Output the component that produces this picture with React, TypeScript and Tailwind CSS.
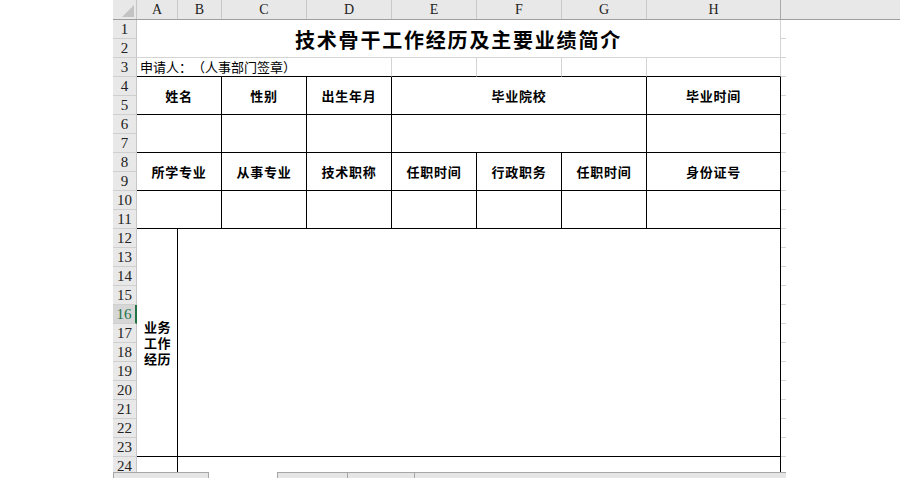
import React from "react";

const cols = [
  { l: "A", w: "w-[41px]" },
  { l: "B", w: "w-[44px]" },
  { l: "C", w: "w-[85px]" },
  { l: "D", w: "w-[85px]" },
  { l: "E", w: "w-[85px]" },
  { l: "F", w: "w-[85px]" },
  { l: "G", w: "w-[85px]" },
  { l: "H", w: "w-[134px]" },
  { l: "", w: "w-[5px]" },
];

const iRows = [
  "row-start-1", "row-start-2", "row-start-3", "row-start-4", "row-start-5", "row-start-6",
  "row-start-7", "row-start-8", "row-start-9", "row-start-10", "row-start-11", "row-start-12",
  "row-start-13", "row-start-14", "row-start-15", "row-start-16", "row-start-17", "row-start-18",
  "row-start-19", "row-start-20", "row-start-21", "row-start-22", "row-start-23", "row-start-24",
];

const B = "border-r border-b border-r-black border-b-black";
const H = "flex items-center justify-center font-bold text-[13px] tracking-[0.8px] text-black";

function Cell({ c, children }: { c: string; children?: React.ReactNode }) {
  return <div className={c}>{children}</div>;
}

export default function App() {
  const rowNums = Array.from({ length: 24 }, (_, i) => i + 1);
  return (
    <div className="w-[900px] h-[478px] overflow-hidden bg-white pl-[113px] font-['Noto_Sans_CJK_SC',sans-serif] [text-spacing-trim:space-all]">
      {/* column header */}
      <div className="flex h-[20px] border-b border-[#9e9e9e] bg-[#e8e8e8] font-['Liberation_Serif',serif] text-[14px] text-[#222]">
        <div className="w-[24px] border-r border-[#c6c6c6] relative">
          <svg className="absolute right-[2px] bottom-[2px]" width="12" height="12" viewBox="0 0 12 12">
            <polygon points="12,0 12,12 0,12" fill="#c3c3c3" />
          </svg>
        </div>
        {cols.map((c, i) => (
          <div
            key={i}
            className={`${c.w} flex items-center justify-center border-r ${i === 7 ? "border-[#a8a8a8]" : "border-[#c9c9c9]"} ${i === 8 ? "border-r-0" : ""}`}
          >
            {c.l}
          </div>
        ))}
      </div>

      {/* body */}
      <div className="flex h-[452px] overflow-hidden">
        <div className="w-[24px] flex flex-col font-['Liberation_Serif',serif] text-[15px]">
          {rowNums.map((n) => (
            <div
              key={n}
              className={`h-[19px] shrink-0 flex items-center justify-center border-b border-b-[#cfcfcf] ${
                n === 16
                  ? "bg-[#d6d6d6] text-[#217346] border-r-2 border-r-[#217346]"
                  : "bg-[#e8e8e8] text-[#222] border-r border-r-[#c6c6c6]"
              }`}
            >
              {n}
            </div>
          ))}
        </div>

        <div className="grid grid-cols-[41px_44px_85px_85px_85px_85px_85px_134px_5px] grid-rows-[repeat(24,19px)] text-black">
          {/* title */}
          <Cell c="col-start-1 col-end-9 row-start-1 row-end-3 border-r border-b border-[#d4d4d4] flex items-center justify-center pt-[2px] text-[20px] font-bold tracking-[1.8px] text-black">
            技术骨干工作经历及主要业绩简介
          </Cell>
          {/* row 3 */}
          <Cell c="col-start-1 col-end-5 row-start-3 border-r border-b border-r-[#d4d4d4] border-b-black flex items-center pl-[3px] text-[13px] whitespace-nowrap">
            申请人：（人事部门签章）
          </Cell>
          <Cell c="col-start-5 row-start-3 border-r border-b border-r-[#d4d4d4] border-b-black" />
          <Cell c="col-start-6 row-start-3 border-r border-b border-r-[#d4d4d4] border-b-black" />
          <Cell c="col-start-7 row-start-3 border-r border-b border-r-[#d4d4d4] border-b-black" />
          <Cell c="col-start-8 row-start-3 border-r border-b border-r-[#d4d4d4] border-b-black" />

          {/* rows 4-5 */}
          <Cell c={`col-start-1 col-end-3 row-start-4 row-end-6 ${B} ${H}`}>姓名</Cell>
          <Cell c={`col-start-3 row-start-4 row-end-6 ${B} ${H}`}>性别</Cell>
          <Cell c={`col-start-4 row-start-4 row-end-6 ${B} ${H}`}>出生年月</Cell>
          <Cell c={`col-start-5 col-end-8 row-start-4 row-end-6 ${B} ${H}`}>毕业院校</Cell>
          <Cell c={`col-start-8 row-start-4 row-end-6 ${B} ${H}`}>毕业时间</Cell>

          {/* rows 6-7 */}
          <Cell c={`col-start-1 col-end-3 row-start-6 row-end-8 ${B}`} />
          <Cell c={`col-start-3 row-start-6 row-end-8 ${B}`} />
          <Cell c={`col-start-4 row-start-6 row-end-8 ${B}`} />
          <Cell c={`col-start-5 col-end-8 row-start-6 row-end-8 ${B}`} />
          <Cell c={`col-start-8 row-start-6 row-end-8 ${B}`} />

          {/* rows 8-9 */}
          <Cell c={`col-start-1 col-end-3 row-start-8 row-end-10 ${B} ${H}`}>所学专业</Cell>
          <Cell c={`col-start-3 row-start-8 row-end-10 ${B} ${H}`}>从事专业</Cell>
          <Cell c={`col-start-4 row-start-8 row-end-10 ${B} ${H}`}>技术职称</Cell>
          <Cell c={`col-start-5 row-start-8 row-end-10 ${B} ${H}`}>任职时间</Cell>
          <Cell c={`col-start-6 row-start-8 row-end-10 ${B} ${H}`}>行政职务</Cell>
          <Cell c={`col-start-7 row-start-8 row-end-10 ${B} ${H}`}>任职时间</Cell>
          <Cell c={`col-start-8 row-start-8 row-end-10 ${B} ${H}`}>身份证号</Cell>

          {/* rows 10-11 */}
          <Cell c={`col-start-1 col-end-3 row-start-10 row-end-12 ${B}`} />
          <Cell c={`col-start-3 row-start-10 row-end-12 ${B}`} />
          <Cell c={`col-start-4 row-start-10 row-end-12 ${B}`} />
          <Cell c={`col-start-5 row-start-10 row-end-12 ${B}`} />
          <Cell c={`col-start-6 row-start-10 row-end-12 ${B}`} />
          <Cell c={`col-start-7 row-start-10 row-end-12 ${B}`} />
          <Cell c={`col-start-8 row-start-10 row-end-12 ${B}`} />

          {/* rows 12-23 */}
          <Cell c={`col-start-1 row-start-12 row-end-24 ${B} flex flex-col items-center justify-center font-bold text-[13px] leading-[16px] tracking-[0.6px] pl-[1px]`}>
            <span>业务</span>
            <span>工作</span>
            <span>经历</span>
          </Cell>
          <Cell c={`col-start-2 col-end-9 row-start-12 row-end-24 ${B}`} />

          {/* row 24 */}
          <Cell c="col-start-1 row-start-24 border-r border-b border-r-black border-b-[#d4d4d4]" />
          <Cell c="col-start-2 col-end-9 row-start-24 border-r border-b border-r-black border-b-[#d4d4d4]" />

          {/* column I gridline ticks */}
          {iRows.map((r, i) => (
            <div key={i} className={`col-start-9 ${r} border-b border-[#d4d4d4]`} />
          ))}
        </div>
      </div>

      {/* bottom sheet bar */}
      <div className="flex h-[6px]">
        <div className="w-[96px] border-t border-r border-l border-[#a6a6a6] bg-[#e6e6e6]" />
        <div className="w-[68px]" />
        <div className="flex w-[509px] border-t border-l border-[#a6a6a6] bg-[#e6e6e6]">
          <div className="w-[70px] border-r border-[#a6a6a6]" />
          <div className="w-[67px] border-r border-[#a6a6a6]" />
          <div className="flex-1" />
        </div>
      </div>
    </div>
  );
}
